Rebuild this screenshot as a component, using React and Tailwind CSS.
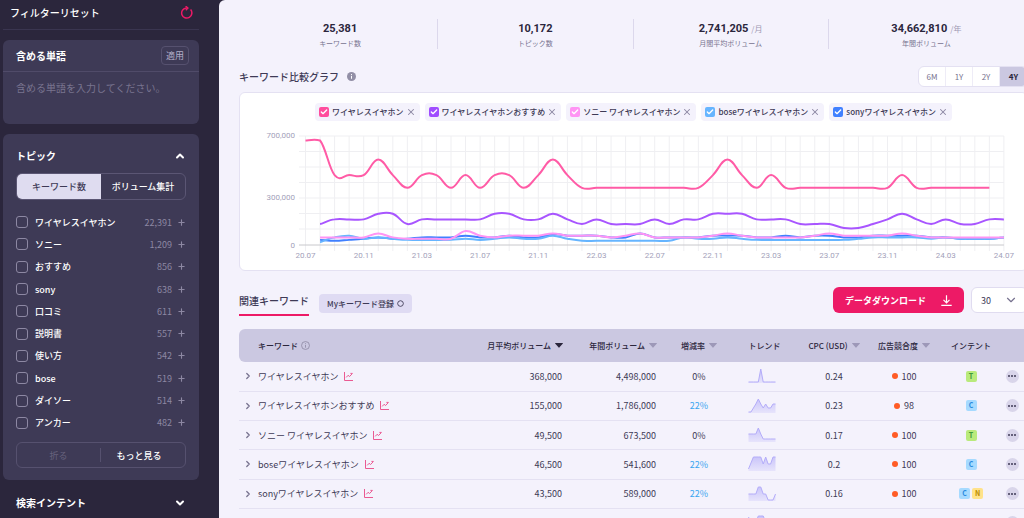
import React, { useState } from 'react';
import { ChevronUp, ChevronDown, ChevronRight, Plus, X, Check } from 'lucide-react';

const topics = [
    { name: 'ワイヤレスイヤホン', count: '22,391' },
    { name: 'ソニー', count: '1,209' },
    { name: 'おすすめ', count: '856' },
    { name: 'sony', count: '638' },
    { name: '口コミ', count: '611' },
    { name: '説明書', count: '557' },
    { name: '使い方', count: '542' },
    { name: 'bose', count: '519' },
    { name: 'ダイソー', count: '514' },
    { name: 'アンカー', count: '482' },
];

const stats = [
    { value: '25,381', unit: '', label: 'キーワード数' },
    { value: '10,172', unit: '', label: 'トピック数' },
    { value: '2,741,205', unit: '/月', label: '月間平均ボリューム' },
    { value: '34,662,810', unit: '/年', label: '年間ボリューム' },
];

// monthly volumes in thousands, start = month index counted from 20.07
const series = [
    {
        name: 'ワイヤレスイヤホン',
        box: 'checked:bg-[#ff4d9d]',
        color: '#ff5ba6',
        start: 0,
        data: [673, 673, 450, 450, 450, 550, 450, 368, 450, 450, 368, 450, 368, 450, 450, 368, 450, 550, 450, 368, 368, 368, 368, 368, 368, 368, 368, 368, 450, 550, 450, 368, 450, 368, 368, 368, 368, 368, 368, 368, 368, 450, 368, 368, 368, 368, 368, 368],
    },
    {
        name: 'ワイヤレスイヤホンおすすめ',
        box: 'checked:bg-[#a04dff]',
        color: '#a855ff',
        start: 1,
        data: [135, 165, 165, 165, 201, 201, 135, 165, 165, 165, 165, 165, 201, 201, 165, 165, 201, 165, 135, 165, 135, 135, 135, 165, 135, 165, 165, 201, 201, 201, 165, 165, 165, 135, 135, 135, 110, 110, 135, 165, 201, 165, 135, 165, 135, 135, 165, 165],
    },
    {
        name: 'ソニー ワイヤレスイヤホン',
        box: 'checked:bg-[#ff94f4]',
        color: '#ff94f4',
        start: 1,
        data: [49, 49, 49, 49, 74, 49, 40, 40, 40, 40, 90, 60, 49, 60, 60, 60, 74, 60, 60, 60, 49, 60, 74, 49, 49, 49, 49, 60, 74, 60, 49, 49, 49, 49, 60, 74, 60, 60, 60, 60, 74, 60, 49, 49, 49, 49, 49, 49],
    },
    {
        name: 'boseワイヤレスイヤホン',
        box: 'checked:bg-[#66b5ff]',
        color: '#66b5ff',
        start: 1,
        data: [18, 49, 60, 40, 49, 40, 33, 33, 33, 33, 40, 33, 40, 49, 40, 40, 60, 40, 27, 27, 27, 27, 27, 27, 27, 49, 40, 40, 49, 40, 33, 33, 33, 33, 33, 33, 33, 40, 49, 49, 49, 49, 40, 49, 40, 40, 40, 49],
    },
    {
        name: 'sonyワイヤレスイヤホン',
        box: 'checked:bg-[#4080ff]',
        color: '#4080ff',
        start: 1,
        data: [33, 27, 33, 40, 49, 40, 40, 49, 49, 49, 60, 49, 49, 60, 49, 49, 70, 60, 60, 60, 49, 49, 74, 49, 49, 49, 49, 60, 60, 60, 49, 49, 60, 49, 60, 60, 49, 49, 60, 60, 60, 60, 49, 49, 40, 40, 40, 49],
    },
];

const months = ['20.07', '20.11', '21.03', '21.07', '21.11', '22.03', '22.07', '22.11', '23.03', '23.07', '23.11', '24.03', '24.07'];

const rows = [
    { keyword: 'ワイヤレスイヤホン', monthly: '368,000', yearly: '4,498,000', rate: '0%', cpc: '0.24', comp: '100', intents: ['T'], trend: [1, 1, 1, 1, 1, 14, 1, 1, 1, 1, 1, 1] },
    { keyword: 'ワイヤレスイヤホンおすすめ', monthly: '155,000', yearly: '1,786,000', rate: '22%', cpc: '0.23', comp: '98', intents: ['C'], trend: [1, 1, 5, 9, 14, 9, 5, 9, 5, 5, 9, 9] },
    { keyword: 'ソニー ワイヤレスイヤホン', monthly: '49,500', yearly: '673,500', rate: '0%', cpc: '0.17', comp: '100', intents: ['T'], trend: [8, 8, 8, 8, 14, 8, 3, 3, 3, 3, 3, 3] },
    { keyword: 'boseワイヤレスイヤホン', monthly: '46,500', yearly: '541,600', rate: '22%', cpc: '0.2', comp: '100', intents: ['C'], trend: [2, 8, 14, 14, 14, 14, 7, 14, 7, 7, 14, 14] },
    { keyword: 'sonyワイヤレスイヤホン', monthly: '43,500', yearly: '589,000', rate: '22%', cpc: '0.16', comp: '100', intents: ['C', 'N'], trend: [7, 7, 7, 7, 14, 14, 7, 7, 1, 1, 1, 7] },
    { keyword: '', monthly: '', yearly: '', rate: '', cpc: '', comp: '', intents: [], trend: [13, 8, 8, 8, 14, 14, 14, 8, 8, 8, 8, 8] },
];

const intentColors = {
    T: 'bg-[#b9ea7c] text-[#3f9a3a]',
    C: 'bg-[#a6daff] text-[#2a8be0]',
    N: 'bg-[#ffe28a] text-[#b98a00]',
};

const toX = (i) => 65.5 + i * 14.55;
const toY = (v) => 124 - v * 0.1553;

// smooth curve through the points
const curve = (data, start) => {
    const pts = data.map((v, i) => [toX(i + start), toY(v)]);
    const k = 0.2;
    let d = `M${pts[0][0]} ${pts[0][1]}`;
    for (let i = 0; i < pts.length - 1; i++) {
        const p0 = pts[i - 1] || pts[i];
        const p1 = pts[i];
        const p2 = pts[i + 1];
        const p3 = pts[i + 2] || p2;
        // softer bend on the first segment
        const bend = i === 0 ? 0.05 : k;
        d += ` C${p1[0] + (p2[0] - p0[0]) * k} ${p1[1] + (p2[1] - p0[1]) * bend} ${p2[0] - (p3[0] - p1[0]) * k} ${p2[1] - (p3[1] - p1[1]) * bend} ${p2[0]} ${p2[1]}`;
    }
    return d;
};

const Sparkline = ({ data }) => {
    const line = data.map((v, i) => `${(i * 27) / 11 + 0.5},${15 - v}`).join(' ');
    return (
        <svg viewBox="0 0 28 16" className="block mx-auto w-7 h-4">
            <defs>
                <linearGradient id="spark" x1="0" y1="0" x2="0" y2="1">
                    <stop offset="0" stopColor="#b3acf9" stopOpacity="0.65" />
                    <stop offset="1" stopColor="#b3acf9" stopOpacity="0.2" />
                </linearGradient>
            </defs>
            <polygon points={`0.5,15 ${line} 27.5,15`} fill="url(#spark)" />
            <polyline points={line} fill="none" stroke="#b3acf9" strokeWidth="1" />
        </svg>
    );
};

const SortArrow = ({ active }) => (
    <svg viewBox="0 0 8 5" className={`w-2 h-[5px] ${active ? 'fill-[#2b263c]' : 'fill-[#9d98b8]'}`}>
        <path d="M0.3 0h7.4a.3.3 0 0 1 .2.5L4.3 4.6a.4.4 0 0 1-.6 0L.1.5A.3.3 0 0 1 .3 0z" />
    </svg>
);

const GraphIcon = () => (
    <svg viewBox="0 0 9 9" className="w-[9px] h-[9px]" fill="none" stroke="#ea5a92" strokeWidth="1">
        <path d="M.5 0v8.5H9M2.2 5.4l1.9-2.1 1.5 1.2L8.3 1.6M6.4 1.4h2.1" />
    </svg>
);

const ResetIcon = () => (
    <svg viewBox="0 0 13 13" className="w-[13px] h-[13px]" fill="none" stroke="#ed1a66" strokeWidth="1.5">
        <path d="M10.6 3.6A5.1 5.1 0 1 1 6 1.9h1" />
        <path d="M5.6 0l2.4 2-2.2 2.2" strokeWidth="1.3" />
    </svg>
);

const Sidebar = () => {
    const [mode, setMode] = useState('keyword');

    return (
        <aside className="w-[219px] shrink-0 pl-[3px] pr-5 text-white">
            <div className="flex items-center justify-between h-[30px] pl-[7px] pr-[6px] pb-1 border-b border-[#3a3550]">
                <h2 className="text-[10px] font-medium">フィルターリセット</h2>
                <button aria-label="リセット">
                    <ResetIcon />
                </button>
            </div>

            <section className="mt-[10px] h-[84px] rounded-md bg-[#3e3a56]">
                <div className="flex items-center justify-between h-8 pl-[13px] pr-[10px] border-b border-[#504b69]">
                    <label htmlFor="include" className="text-[10px] font-bold">含める単語</label>
                    <button className="h-[19px] px-1 rounded-sm border border-[#56516f] text-[9px] leading-4 text-[#b3aec8]">適用</button>
                </div>
                <textarea
                    id="include"
                    placeholder="含める単語を入力してください。"
                    className="block w-full h-[50px] px-[13px] py-2 resize-none bg-transparent text-[10px] leading-4 outline-none placeholder:text-[#79748f]"
                />
            </section>

            <section className="mt-[10px] px-[13px] pt-3 pb-3 rounded-md bg-[#3e3a56]">
                <div className="flex items-center justify-between h-5">
                    <h2 className="text-[10px] font-bold">トピック</h2>
                    <ChevronUp className="w-3 h-3" strokeWidth={4} />
                </div>
                <div className="flex mt-[7px] h-[27px] rounded-md border border-[#5b5674] overflow-hidden text-[9px] font-medium">
                    <button
                        onClick={() => setMode('keyword')}
                        className={`flex-1 ${mode === 'keyword' ? 'bg-[#dfdcf0] text-[#3e3a56]' : 'text-white'}`}
                    >
                        キーワード数
                    </button>
                    <button
                        onClick={() => setMode('volume')}
                        className={`flex-1 ${mode === 'volume' ? 'bg-[#dfdcf0] text-[#3e3a56]' : 'text-white'}`}
                    >
                        ボリューム集計
                    </button>
                </div>
                <ul className="grid auto-rows-fr h-[223px] mt-[11px]">
                    {topics.map((topic) => (
                        <li key={topic.name} className="flex items-center">
                            <label className="flex items-center gap-[7px] flex-1 text-[9px] font-medium">
                                <input type="checkbox" className="appearance-none w-3 h-3 rounded-[3px] border border-[#8d88a3] checked:bg-[#ed1a66]" />
                                {topic.name}
                            </label>
                            <span className="text-[9px] text-[#8d88a3]">{topic.count}</span>
                            <button aria-label="追加" className="ml-[5px] text-[#8d88a3]">
                                <Plus className="w-[9px] h-[9px]" strokeWidth={3} />
                            </button>
                        </li>
                    ))}
                </ul>
                <div className="grid grid-cols-2 items-center mt-2 h-[26px] rounded-md border border-[#56516f] text-[9px]">
                    <button className="h-[14px] border-r border-[#56516f] text-[#67627d]">折る</button>
                    <button className="h-[14px] pr-2 font-medium">もっと見る</button>
                </div>
            </section>

            <section className="flex items-center justify-between mt-[13px] h-5 px-[13px]">
                <h2 className="text-[10px] font-bold">検索インテント</h2>
                <ChevronDown className="w-3 h-3" strokeWidth={4} />
            </section>
        </aside>
    );
};

const Chart = () => (
    <svg viewBox="0 0 787 149" className="block w-full" fontFamily="Roboto, sans-serif" fontSize="8">
        <g stroke="#efeff2" strokeWidth="1">
            {[0, 1, 2, 3, 4, 5, 6].map((n) => (
                <line key={n} x1="59" x2={toX(48)} y1={15 + n * 15.5} y2={15 + n * 15.5} />
            ))}
            {Array.from({ length: 49 }, (_, i) => (
                <line key={i} x1={toX(i)} x2={toX(i)} y1="15" y2="130" />
            ))}
        </g>
        <line x1="59" x2={toX(48)} y1="124" y2="124" stroke="#c8c8cc" />
        <g fill="#a39fba">
            <text x="55" y="17" textAnchor="end">700,000</text>
            <text x="55" y="79" textAnchor="end">300,000</text>
            <text x="55" y="127" textAnchor="end">0</text>
            {months.map((m, i) => (
                <text key={m} x={toX(i * 4)} y="137" textAnchor="middle">{m}</text>
            ))}
        </g>
        {[4, 3, 2, 1, 0].map((n) => (
            <path key={n} d={curve(series[n].data, series[n].start)} fill="none" stroke={series[n].color} strokeWidth="2" />
        ))}
    </svg>
);

const App = () => {
    const [range, setRange] = useState('4Y');

    return (
        <div
            lang="ja"
            className="flex h-screen overflow-hidden bg-[#2b263c] font-['Noto_Sans_CJK_JP','Noto_Sans',sans-serif] leading-none text-[#3e3a56]"
        >
            <Sidebar />
            <main className="flex-1 min-w-0 overflow-hidden rounded-tl-md bg-[#f4f2fc]">
                <div className="pl-5 -mr-1 pt-[19px]">
                    <div className="grid grid-cols-4 mx-1 divide-x divide-[#dcd8ec]">
                        {stats.map((stat) => (
                            <div key={stat.label} className="flex flex-col items-center gap-1 h-[30px] pt-1">
                                <p className="text-[8px] leading-[11px] text-[#9d98b3]">
                                    <strong className="text-[11px] font-bold font-['Roboto',sans-serif] text-[#2b263c]">{stat.value}</strong>
                                    {stat.unit && <span className="ml-[3px]">{stat.unit}</span>}
                                </p>
                                <p className="text-[7px] leading-[10px] text-[#77728f]">{stat.label}</p>
                            </div>
                        ))}
                    </div>

                    <div className="flex items-center justify-between mt-[17px] h-[21px]">
                        <h1 className="flex items-center gap-2 text-[10px] font-medium">
                            キーワード比較グラフ
                            <svg viewBox="0 0 10 10" className="w-[9px] h-[9px]">
                                <circle cx="5" cy="5" r="5" fill="#928fa6" />
                                <path d="M5 4.3v3.2M5 2.3v1.1" stroke="#fff" strokeWidth="1.1" />
                            </svg>
                        </h1>
                        <div className="flex h-[21px] rounded-md border border-[#e4e1f2] bg-white overflow-hidden divide-x divide-[#eeecf7] text-[8px] text-[#77728f]">
                            {['6M', '1Y', '2Y', '4Y'].map((r) => (
                                <button
                                    key={r}
                                    onClick={() => setRange(r)}
                                    className={`w-[27px] ${range === r ? 'bg-[#cbc8e1] text-[#2b263c] font-bold' : ''}`}
                                >
                                    {r}
                                </button>
                            ))}
                        </div>
                    </div>

                    <section className="mt-[5px] pt-[10px] rounded-md border border-[#e4e1f2] bg-white">
                        <div className="flex justify-center gap-[5px]">
                            {series.map((s) => (
                                <div key={s.name} className="flex items-center h-[18px] px-1 gap-[2px] rounded-sm bg-[#f4f2fc] text-[8px] font-medium whitespace-nowrap">
                                    <label className="flex items-center gap-[3px]">
                                        <span className="grid">
                                            <input type="checkbox" defaultChecked className={`appearance-none col-start-1 row-start-1 w-[10px] h-[10px] rounded-[2px] bg-[#dcd8ec] ${s.box}`} />
                                            <Check className="col-start-1 row-start-1 place-self-center w-2 h-2 text-white pointer-events-none" strokeWidth={4} />
                                        </span>
                                        {s.name}
                                    </label>
                                    <button aria-label="削除" className="text-[#8d88a3]">
                                        <X className="w-[10px] h-[10px]" strokeWidth={2.5} />
                                    </button>
                                </div>
                            ))}
                        </div>
                        <Chart />
                    </section>

                    <div className="flex items-start justify-between mt-4">
                        <div className="flex items-end gap-[10px]">
                            <h2 className="flex items-center h-[29px] border-b-2 border-[#ed1a66] text-[10px] font-medium">関連キーワード</h2>
                            <button className="flex items-center gap-[3px] h-[19px] mb-[3px] px-2 rounded-sm bg-[#dfdbf3] text-[8px] font-medium">
                                Myキーワード登録
                                <svg viewBox="0 0 8 8" className="w-[7px] h-[7px]" fill="none" stroke="#3e3a56">
                                    <path d="M4 .8l2.4.9.9 2.3-.9 2.4-2.4.9-2.4-.9L.7 4l.9-2.3z" />
                                </svg>
                            </button>
                        </div>
                        <div className="flex gap-[7px]">
                            <button className="flex items-center gap-[15px] h-[26px] px-3 rounded-md bg-[#ed1a66] text-[9px] font-bold text-white">
                                データダウンロード
                                <svg viewBox="0 0 11 11" className="w-[11px] h-[11px]" fill="none" stroke="currentColor" strokeWidth="1.2">
                                    <path d="M5.5.3v7.2M2.5 4.8l3 3 3-3M.3 10.4h10.4" />
                                </svg>
                            </button>
                            <div className="grid">
                                <select aria-label="表示件数" className="appearance-none col-start-1 row-start-1 w-[57px] h-[26px] pl-[9px] rounded-md border border-[#e0dcf0] bg-white text-[9px]">
                                    <option>30</option>
                                    <option>50</option>
                                    <option>100</option>
                                </select>
                                <ChevronDown className="col-start-1 row-start-1 self-center justify-self-end mr-[10px] w-[14px] h-[14px] text-[#77728f] pointer-events-none" strokeWidth={2} />
                            </div>
                        </div>
                    </div>

                    <table className="table-fixed w-full h-[209px] mt-[13px] text-[9px] whitespace-nowrap">
                        <colgroup>
                            <col />
                            <col className="w-[103px]" />
                            <col className="w-[106px]" />
                            <col className="w-[60px]" />
                            <col className="w-[71px]" />
                            <col className="w-[68px]" />
                            <col className="w-[72px]" />
                            <col className="w-[62px]" />
                            <col className="w-[26px]" />
                        </colgroup>
                        <thead>
                            <tr className="h-[33px] bg-[#cbc8e1] text-[8px] text-[#2b263c]">
                                <th className="pl-[19px] rounded-l-md font-medium">
                                    <span className="flex items-center gap-[3px]">
                                        キーワード
                                        <svg viewBox="0 0 10 10" className="w-[9px] h-[9px]" fill="none" stroke="#8d88a3" strokeWidth="0.9">
                                            <circle cx="5" cy="5" r="4.4" />
                                            <path d="M5 4.4v3M5 2.5v1" />
                                        </svg>
                                    </span>
                                </th>
                                <th className="font-medium">
                                    <span className="flex items-center justify-end gap-1">月平均ボリューム<SortArrow active /></span>
                                </th>
                                <th className="pr-3 font-medium">
                                    <span className="flex items-center justify-end gap-1">年間ボリューム<SortArrow /></span>
                                </th>
                                <th className="font-medium">
                                    <span className="flex items-center justify-center gap-1">増減率<SortArrow /></span>
                                </th>
                                <th className="font-medium">トレンド</th>
                                <th className="font-medium">
                                    <span className="flex items-center justify-center gap-1">CPC (USD)<SortArrow /></span>
                                </th>
                                <th className="font-medium">
                                    <span className="flex items-center justify-center gap-1">広告競合度<SortArrow /></span>
                                </th>
                                <th className="font-medium">インテント</th>
                                <th></th>
                            </tr>
                        </thead>
                        <tbody>
                            {rows.map((row, index) => (
                                <tr key={index} className="h-[29px] border-b border-[#e4e1f2]">
                                    <td className="pl-1">
                                        <div className="flex items-center">
                                            <ChevronRight className="w-[10px] h-[10px] mr-[5px] text-[#77728f]" strokeWidth={3} />
                                            <span className="mr-[6px]">{row.keyword}</span>
                                            {row.keyword && <GraphIcon />}
                                        </div>
                                    </td>
                                    <td className="pr-px text-right">{row.monthly}</td>
                                    <td className="pr-[13px] text-right">{row.yearly}</td>
                                    <td className={`text-center ${row.rate === '22%' ? 'text-[#3aa5f0]' : ''}`}>{row.rate}</td>
                                    <td className="pr-[6px]"><Sparkline data={row.trend} /></td>
                                    <td className="text-center">{row.cpc}</td>
                                    <td>
                                        {row.comp && (
                                            <div className="flex items-center justify-center gap-1">
                                                <span className="w-[6px] h-[6px] rounded-full bg-[#ff5c26]"></span>
                                                {row.comp}
                                            </div>
                                        )}
                                    </td>
                                    <td>
                                        <div className="flex justify-center gap-[2px]">
                                            {row.intents.map((intent) => (
                                                <span key={intent} className={`flex items-center justify-center w-[11px] h-[11px] rounded-[2px] text-[7px] font-bold ${intentColors[intent]}`}>
                                                    {intent}
                                                </span>
                                            ))}
                                        </div>
                                    </td>
                                    <td className="pr-[6px]">
                                        <button aria-label="メニュー" className="flex items-center justify-center gap-px w-[13px] h-[13px] mx-auto rounded-full bg-[#d9d5ea]">
                                            <span className="w-[2px] h-[2px] rounded-full bg-[#3e3a56]"></span>
                                            <span className="w-[2px] h-[2px] rounded-full bg-[#3e3a56]"></span>
                                            <span className="w-[2px] h-[2px] rounded-full bg-[#3e3a56]"></span>
                                        </button>
                                    </td>
                                </tr>
                            ))}
                        </tbody>
                    </table>
                </div>
            </main>
        </div>
    );
};

export default App;
